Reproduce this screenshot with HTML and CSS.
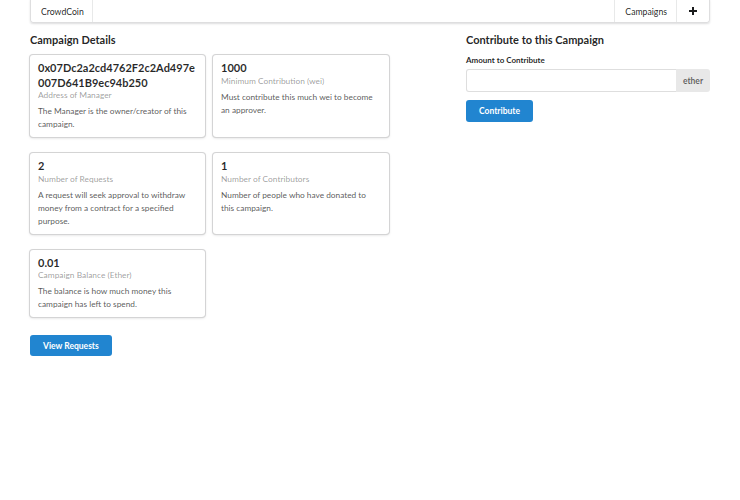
FILE: index.html
```html
<!DOCTYPE html>
<html>
<head>
<meta charset="utf-8">
<link rel="stylesheet" href="styles.css">
</head>
<body>
<div class="container">
  <div class="menu">
    <div class="item brand">CrowdCoin</div>
    <div class="spacer"></div>
    <div class="item divl">Campaigns</div>
    <div class="item divl plus"><svg width="8" height="8" viewBox="0 0 8 8"><path d="M3 0h2v3h3v2H5v3H3V5H0V3h3z" fill="#1b1c1d"/></svg></div>
  </div>
  <div class="grid">
    <div class="left">
      <h3 class="title">Campaign Details</h3>
      <div class="cards">
        <div class="card">
          <div class="header">0x07Dc2a2cd4762F2c2Ad497e007D641B9ec94b250</div>
          <div class="meta">Address of Manager</div>
          <div class="desc">The Manager is the owner/creator of this campaign.</div>
        </div>
        <div class="card">
          <div class="header">1000</div>
          <div class="meta">Minimum Contribution (wei)</div>
          <div class="desc">Must contribute this much wei to become an approver.</div>
        </div>
        <div class="card">
          <div class="header">2</div>
          <div class="meta">Number of Requests</div>
          <div class="desc">A request will seek approval to withdraw money from a contract for a specified purpose.</div>
        </div>
        <div class="card">
          <div class="header">1</div>
          <div class="meta">Number of Contributors</div>
          <div class="desc">Number of people who have donated to this campaign.</div>
        </div>
        <div class="card">
          <div class="header">0.01</div>
          <div class="meta">Campaign Balance (Ether)</div>
          <div class="desc">The balance is how much money this campaign has left to spend.</div>
        </div>
      </div>
      <button class="btn view">View Requests</button>
    </div>
    <div class="right">
      <h3 class="title">Contribute to this Campaign</h3>
      <form class="form">
        <label class="lbl">Amount to Contribute</label>
        <div class="input">
          <input type="text">
          <span class="unit">ether</span>
        </div>
        <button class="btn" type="button">Contribute</button>
      </form>
    </div>
  </div>
</div>
</body>
</html>
```
FILE: styles.css
```css
* { box-sizing: border-box; }
html, body { margin: 0; padding: 0; background: #fff; }
body { font-family: Lato, "Helvetica Neue", Arial, sans-serif; color: rgba(0,0,0,.87); }
.container { width: 680px; margin: 0 auto; }
.menu {
  display: flex; height: 24px; margin-top: -1px;
  border: 1px solid rgba(34,36,38,.15); border-radius: 0 0 3px 3px;
  box-shadow: 0 1px 2px 0 rgba(34,36,38,.15);
  font-size: 8.7px;
}
.item { display: flex; align-items: center; padding: 0 9px 0 10px; color: rgba(0,0,0,.87); }
.brand { border-right: 1px solid rgba(34,36,38,.1); width: 62px; }
.divl { border-left: 1px solid rgba(34,36,38,.1); }
.spacer { flex: 1; }
.plus { width: 33px; justify-content: center; padding: 0; }
.grid { display: flex; margin-top: 9px; }
.left { width: 425px; }
.right { flex: 1; padding-left: 11px; }
.title { margin: 0; font-size: 11px; font-weight: 700; line-height: 16px; height: 22px; }
.cards { display: grid; grid-template-columns: 175px 176px; column-gap: 8px; row-gap: 16px; align-items: stretch; margin-top: 1px; }
.card {
  border-radius: 3px; padding: 6px 8px 6px;
  box-shadow: 0 1px 3px 0 #d4d4d5, 0 0 0 1px #d4d4d5;
}
.header { font-weight: 700; font-size: 11px; line-height: 14.5px; color: rgba(0,0,0,.85); word-break: break-all; }
.meta { font-size: 8.4px; line-height: 11px; color: rgba(0,0,0,.4); }
.desc { font-size: 8.3px; line-height: 13px; color: rgba(0,0,0,.68); margin-top: 4px; }
.btn {
  display: inline-block; border: 0; border-radius: 3px; background: #2185d0; color: #fff;
  font-family: Lato, Arial, sans-serif; font-weight: 700; font-size: 8.5px;
  height: 21px; padding: 0 13px; cursor: pointer;
}
.view { margin-top: 18px; }
.form { display: block; }
.lbl { display: block; font-size: 8px; font-weight: 700; line-height: 10px; margin-top: 1px; }
.input { display: flex; margin-top: 4px; height: 23px; width: 244px; }
.input input {
  flex: 1; min-width: 0; border: 1px solid rgba(34,36,38,.15); border-right: 0; border-radius: 3px 0 0 3px; margin: 0; padding: 0 8px; font-size: 10px; outline: none;
}
.unit {
  width: 34px; background: #e8e8e8; color: rgba(0,0,0,.6); font-weight: 700; font-size: 8.5px;
  display: flex; align-items: center; justify-content: center; border-radius: 0 3px 3px 0;
}
.form .btn { margin-top: 8px; height: 22px; padding: 0 13px; }
```
